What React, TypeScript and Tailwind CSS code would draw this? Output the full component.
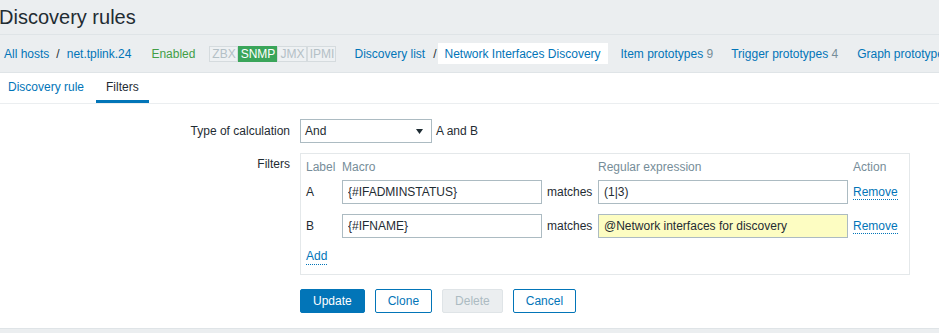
import React from "react";

const LINK = "text-[#0275b8]";

function StatusBox({ label, active, w }: { label: string; active?: boolean; w: string }) {
  return (
    <span
      className={
        "flex h-[16px] shrink-0 items-center justify-center border text-[12px] leading-none " +
        w +
        (active ? " border-[#3aa55a] bg-[#3aa55a] text-white" : " border-[#d5dbde] bg-[#eef1f3] text-[#b4c0c6]")
      }
    >
      {label}
    </span>
  );
}

function DottedLink({ children }: { children: React.ReactNode }) {
  return (
    <span className={"inline-block border-b border-dotted border-[#0275b8] leading-[14px] " + LINK}>{children}</span>
  );
}

function FilterRow({ label, macro, regex, yellow }: { label: string; macro: string; regex: string; yellow?: boolean }) {
  return (
    <div className="grid h-[24px] grid-cols-[36px_200px_56px_250px_1fr] items-center">
      <span>{label}</span>
      <input
        readOnly
        defaultValue={macro}
        className="h-[24px] w-[200px] border border-[#acbbc2] bg-white px-[5px] text-[12px] text-[#1f2c33] outline-none"
      />
      <span className="pl-[5px]">matches</span>
      <input
        readOnly
        defaultValue={regex}
        className={
          "h-[24px] w-[250px] border border-[#acbbc2] px-[5px] text-[12px] text-[#1f2c33] outline-none " +
          (yellow ? "bg-[#fdfdc2]" : "bg-white")
        }
      />
      <span className="pl-[5px]">
        <DottedLink>Remove</DottedLink>
      </span>
    </div>
  );
}

export default function App() {
  return (
    <div className="h-[333px] w-[939px] overflow-hidden bg-white font-['Liberation_Sans',Arial,sans-serif] text-[12px] text-[#1f2c33]">
      {/* title */}
      <div className="h-[35px] border-b border-[#dfe4e7] bg-[#ebeef0]">
        <h1 className="ml-[-1px] text-[20px] leading-[34px] text-[#1f2c33]">Discovery rules</h1>
      </div>

      {/* breadcrumbs */}
      <div className="flex h-[38px] items-center overflow-hidden whitespace-nowrap border-b border-[#dfe4e7] bg-[#ebeef0] pl-[4px] [&>*]:shrink-0">
        <span className={LINK}>All hosts</span>
        <span className="ml-[7px]">/</span>
        <span className={"ml-[7px] " + LINK}>net.tplink.24</span>
        <span className="ml-[20px] text-[#429e47]">Enabled</span>
        <div className="ml-[14px] flex">
          <StatusBox label="ZBX" w="w-[29px]" />
          <StatusBox label="SNMP" w="w-[39px]" active />
          <StatusBox label="JMX" w="w-[30px]" />
          <StatusBox label="IPMI" w="w-[29px]" />
        </div>
        <span className={"ml-[18px] " + LINK}>Discovery list</span>
        <span className="ml-[8px]">/</span>
        <span className={"ml-[1px] flex h-[21px] w-[170px] items-center bg-white pl-[7px] " + LINK}>
          Network Interfaces Discovery
        </span>
        <span className={"ml-[13px] " + LINK}>
          Item prototypes <span className="text-[#768d99]">9</span>
        </span>
        <span className={"ml-[18px] " + LINK}>
          Trigger prototypes <span className="text-[#768d99]">4</span>
        </span>
        <span className={"ml-[19px] " + LINK}>Graph prototypes</span>
      </div>

      {/* tabs */}
      <div className="flex border-b border-[#ebeef0]">
        <div className={"flex h-[30px] items-center border-b-[3px] border-transparent pl-[8px] pr-[12px] " + LINK}>
          Discovery rule
        </div>
        <div className="flex h-[30px] items-center border-b-[3px] border-[#0275b8] px-[10px]">Filters</div>
      </div>

      {/* form */}
      <div className="pb-[15px] pt-[15px]">
        <div className="flex h-[24px] items-center">
          <span className="w-[290px] text-right">Type of calculation</span>
          <div className="ml-[10px] flex h-[24px] w-[132px] items-center justify-between border border-[#acbbc2] bg-white pl-[4px] pr-[8px]">
            <span>And</span>
            <svg width="7" height="5" viewBox="0 0 7 5">
              <polygon points="0,0 7,0 3.5,5" fill="#1f2c33" />
            </svg>
          </div>
          <span className="ml-[4px]">A and B</span>
        </div>

        <div className="mt-[10px] flex">
          <span className="w-[290px] pt-[3px] text-right leading-[16px]">Filters</span>
          <div className="ml-[10px] w-[610px] border border-[#e4e8ea] pb-[11px] pl-[5px] pt-[4px]">
            <div className="grid h-[16px] grid-cols-[36px_256px_255px_1fr] items-center text-[#768d99]">
              <span>Label</span>
              <span>Macro</span>
              <span>Regular expression</span>
              <span>Action</span>
            </div>
            <div className="mt-[6px]">
              <FilterRow label="A" macro="{#IFADMINSTATUS}" regex="(1|3)" />
            </div>
            <div className="mt-[10px]">
              <FilterRow label="B" macro="{#IFNAME}" regex="@Network interfaces for discovery" yellow />
            </div>
            <div className="mt-[9px] h-[16px]">
              <span className={"inline-block border-b border-dotted border-[#0275b8] leading-[15px] " + LINK}>Add</span>
            </div>
          </div>
        </div>

        <div className="ml-[300px] mt-[14px] flex gap-[10px]">
          <button className="h-[24px] rounded-[2px] border border-[#0275b8] bg-[#0275b8] px-[12px] text-white">
            Update
          </button>
          <button className={"h-[24px] rounded-[2px] border border-[#0275b8] bg-white px-[12px] " + LINK}>
            Clone
          </button>
          <button className="h-[24px] rounded-[2px] border border-[#dfe4e7] bg-[#ebeef0] px-[12px] text-[#acbbc2]">
            Delete
          </button>
          <button className={"h-[24px] rounded-[2px] border border-[#0275b8] bg-white px-[12px] " + LINK}>
            Cancel
          </button>
        </div>
      </div>

      <div className="h-[10px] border-t border-[#dfe4e7] bg-[#ebeef0]" />
    </div>
  );
}
